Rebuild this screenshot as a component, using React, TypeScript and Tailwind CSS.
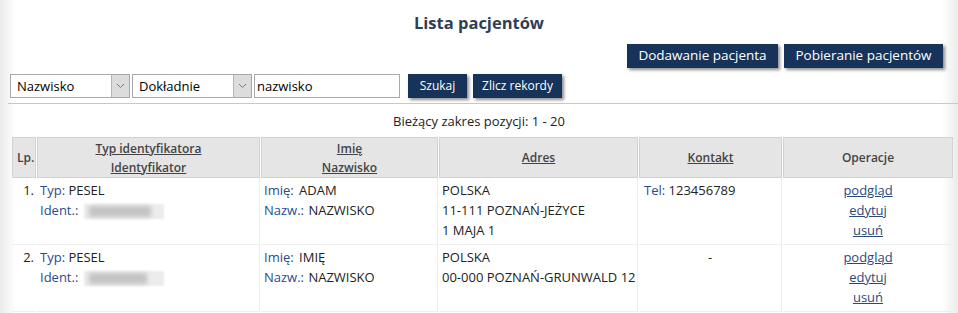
import React from "react";

const font = { fontFamily: '"Open Sans", "Noto Sans", sans-serif' };

const Btn = ({ children, className = "" }: { children: React.ReactNode; className?: string }) => (
  <button
    className={
      "h-6 bg-[#173359] text-white leading-none shadow-[2px_2px_3px_rgba(0,0,0,0.45)] " +
      className
    }
  >
    {children}
  </button>
);

const Select = ({ value }: { value: string }) => (
  <div className="flex h-6 w-[120px] items-stretch border border-[#a9a9a9] bg-white">
    <span className="flex-1 pl-[6px] text-[13px] leading-[22px] text-black">{value}</span>
    <span className="flex w-[18px] items-center justify-center border-l border-[#b5b5b5] bg-[#dcdcdc]">
      <svg width="9" height="6" viewBox="0 0 9 6" fill="none">
        <path d="M1 1l3.5 3.5L8 1" stroke="#777" strokeWidth="1" />
      </svg>
    </span>
  </div>
);

const Blur = ({ w }: { w: number }) => (
  <span className="relative ml-[6px] inline-block h-[15px] w-[80px] align-middle">
    <span className="absolute inset-0 bg-[#ececec] blur-[1px]" />
    <span className="absolute left-[5px] top-[2px] h-[11px] bg-[#c4c4c4] blur-[2px]" style={{ width: w }} />
  </span>
);

type Row = {
  lp: string;
  imie: string;
  adres: string[];
  tel: string | null;
};

const rows: Row[] = [
  { lp: "1.", imie: "ADAM", adres: ["POLSKA", "11-111 POZNAŃ-JEŻYCE", "1 MAJA 1"], tel: "123456789" },
  { lp: "2.", imie: "IMIĘ", adres: ["POLSKA", "00-000 POZNAŃ-GRUNWALD 12"], tel: null },
];

const label = "text-[#2a4c8c]";
const th = "border border-[#d2d2d2] bg-[#e5e5e5] px-1 text-[12px] font-semibold leading-[19px] text-[#444] align-middle";
const td = "border-b border-r border-[#eeeeee] align-top px-[3px] pt-[2px] pb-[4px] text-[13px] leading-[20px] text-[#222]";

export default function App() {
  return (
    <div
      style={font}
      className="min-h-[313px] w-full bg-[linear-gradient(to_right,#ebebeb,#ffffff_16px,#ffffff_calc(100%-16px),#ebebeb)]"
    >
      <h1 className="pt-[13px] text-center text-[16.5px] font-bold leading-[20px] text-[#2e3f55]">Lista pacjentów</h1>

      <div className="mt-[11px] flex justify-end gap-[6px] pr-[15px]">
        <Btn className="w-[151px] text-[13.5px]">Dodawanie pacjenta</Btn>
        <Btn className="w-[159px] text-[13.5px]">Pobieranie pacjentów</Btn>
      </div>

      <div className="mt-[6px] flex items-center pl-[10px]">
        <Select value="Nazwisko" />
        <div className="ml-[2px]">
          <Select value="Dokładnie" />
        </div>
        <input
          readOnly
          value="nazwisko"
          className="ml-[2px] h-6 w-[146px] border border-[#a9a9a9] bg-white pl-[2px] text-[13px] text-black outline-none"
        />
        <Btn className="ml-[8px] w-[59px] text-[12px]">Szukaj</Btn>
        <Btn className="ml-[6px] w-[89px] text-[12px]">Zlicz rekordy</Btn>
      </div>

      <div className="ml-[8px] mt-[5px] border-t border-[#c8c8c8]" />

      <p className="mt-[8px] text-center text-[13px] leading-[18px] text-[#222]">Bieżący zakres pozycji: 1 - 20</p>

      <div className="mt-[7px] pl-[11px] pr-[4px]">
        <table className="w-full table-fixed border-separate border-spacing-x-[1px] border-spacing-y-0">
          <thead>
            <tr className="h-[41px]">
              <th className={th + " w-[24px] px-0"}>Lp.</th>
              <th className={th + " w-[223px]"}>
                <span className="underline">Typ identyfikatora</span>
                <br />
                <span className="underline">Identyfikator</span>
              </th>
              <th className={th + " w-[177px]"}>
                <span className="underline">Imię</span>
                <br />
                <span className="underline">Nazwisko</span>
              </th>
              <th className={th + " w-[199px]"}>
                <span className="underline">Adres</span>
              </th>
              <th className={th + " w-[143px]"}>
                <span className="underline">Kontakt</span>
              </th>
              <th className={th}>Operacje</th>
            </tr>
          </thead>
          <tbody>
            {rows.map((r, i) => (
              <tr key={i} className="h-[67px]">
                <td className={td + " border-r-0 px-0 pr-[2px] text-right"}>{r.lp}</td>
                <td className={td}>
                  <div>
                    <span className={label}>Typ:</span> PESEL
                  </div>
                  <div>
                    <span className={label}>Ident.:</span>
                    <Blur w={i === 0 ? 62 : 58} />
                  </div>
                </td>
                <td className={td}>
                  <div>
                    <span className={label + " mr-[2px]"}>Imię:</span> {r.imie}
                  </div>
                  <div>
                    <span className={label + " mr-[1px]"}>Nazw.:</span> NAZWISKO
                  </div>
                </td>
                <td className={td + " whitespace-nowrap"}>
                  {r.adres.map((a) => (
                    <div key={a}>{a}</div>
                  ))}
                </td>
                <td className={td + (r.tel ? " pl-[5px]" : " text-center")}>
                  {r.tel ? (
                    <>
                      <span className={label}>Tel:</span> {r.tel}
                    </>
                  ) : (
                    "-"
                  )}
                </td>
                <td className={td + " border-r-0 text-center"}>
                  {["podgląd", "edytuj", "usuń"].map((l) => (
                    <div key={l}>
                      <a href="#" className="text-[#2b4a7c] underline">
                        {l}
                      </a>
                    </div>
                  ))}
                </td>
              </tr>
            ))}
          </tbody>
        </table>
      </div>
    </div>
  );
}
